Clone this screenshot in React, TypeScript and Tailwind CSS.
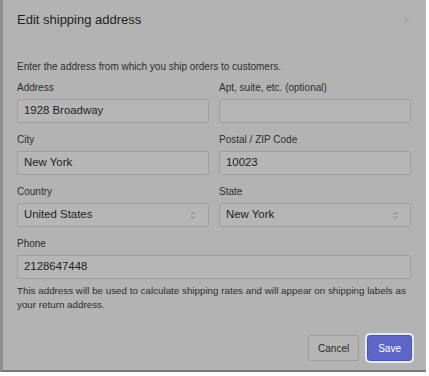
import React from "react";

function Field({ label, value }: { label: string; value?: string }) {
  return (
    <div className="flex flex-col">
      <label className="text-[10px] leading-[14px] text-[#2e2e2e] mb-[4px]">{label}</label>
      <div className="h-[24px] border border-[#9f9f9f] bg-[#b6b6b6] rounded-[2px] px-[6px] flex items-center text-[11.4px] text-[#1e1e1e]">
        {value}
      </div>
    </div>
  );
}

function Select({ label, value }: { label: string; value: string }) {
  return (
    <div className="flex flex-col">
      <label className="text-[10px] leading-[14px] text-[#2e2e2e] mb-[4px]">{label}</label>
      <div className="h-[24px] border border-[#9f9f9f] bg-[#b6b6b6] rounded-[2px] px-[6px] flex items-center justify-between text-[11.4px] text-[#1e1e1e]">
        <span>{value}</span>
        <svg width="6" height="9" viewBox="0 0 6 9" className="mr-[6px]">
          <path d="M1 3.5 L3 1.5 L5 3.5" stroke="#7a7a7a" strokeWidth="1" fill="none" />
          <path d="M1 5.5 L3 7.5 L5 5.5" stroke="#7a7a7a" strokeWidth="1" fill="none" />
        </svg>
      </div>
    </div>
  );
}

export default function App() {
  return (
    <div className="w-[429px] h-[376px] bg-white" style={{ fontFamily: '"Liberation Sans", Arial, sans-serif' }}>
      <div className="w-[426px] h-[372px] bg-[#b3b3b3] border-l-[3px] border-[#8f8f8f] border-b-[2px] border-b-[#777] flex flex-col">
        <div className="h-[40px] pl-[14px] pr-[16px] flex items-center justify-between">
          <h1 className="text-[13px] text-[#1f1f1f]">Edit shipping address</h1>
          <span className="text-[12px] text-[#a6a6a6]">×</span>
        </div>
        <div className="pl-[14px] pr-[15px] pt-[20px] flex flex-col">
          <p className="text-[10px] text-[#2e2e2e] leading-[14px] mb-[7px]">
            Enter the address from which you ship orders to customers.
          </p>
          <div className="grid grid-cols-2 gap-x-[10px] gap-y-[10px]">
            <Field label="Address" value="1928 Broadway" />
            <Field label="Apt, suite, etc. (optional)" />
            <Field label="City" value="New York" />
            <Field label="Postal / ZIP Code" value="10023" />
            <Select label="Country" value="United States" />
            <Select label="State" value="New York" />
            <div className="col-span-2">
              <Field label="Phone" value="2128647448" />
            </div>
          </div>
          <p className="text-[9.8px] text-[#2e2e2e] leading-[14px] mt-[5px]">
            This address will be used to calculate shipping rates and will appear on shipping labels as your return address.
          </p>
        </div>
        <div className="mt-auto pb-[9px] pr-[14px] flex justify-end gap-[8px]">
          <button className="h-[26px] px-[9px] border border-[#9c9c9c] bg-[#b5b5b5] rounded-[3px] text-[10px] text-[#2a2a2a]">
            Cancel
          </button>
          <button className="h-[26px] px-[10px] border border-[#4a55b0] bg-[#5c66c6] rounded-[3px] text-[10px] text-white outline outline-2 outline-[#e6e8f6]">
            Save
          </button>
        </div>
      </div>
    </div>
  );
}
